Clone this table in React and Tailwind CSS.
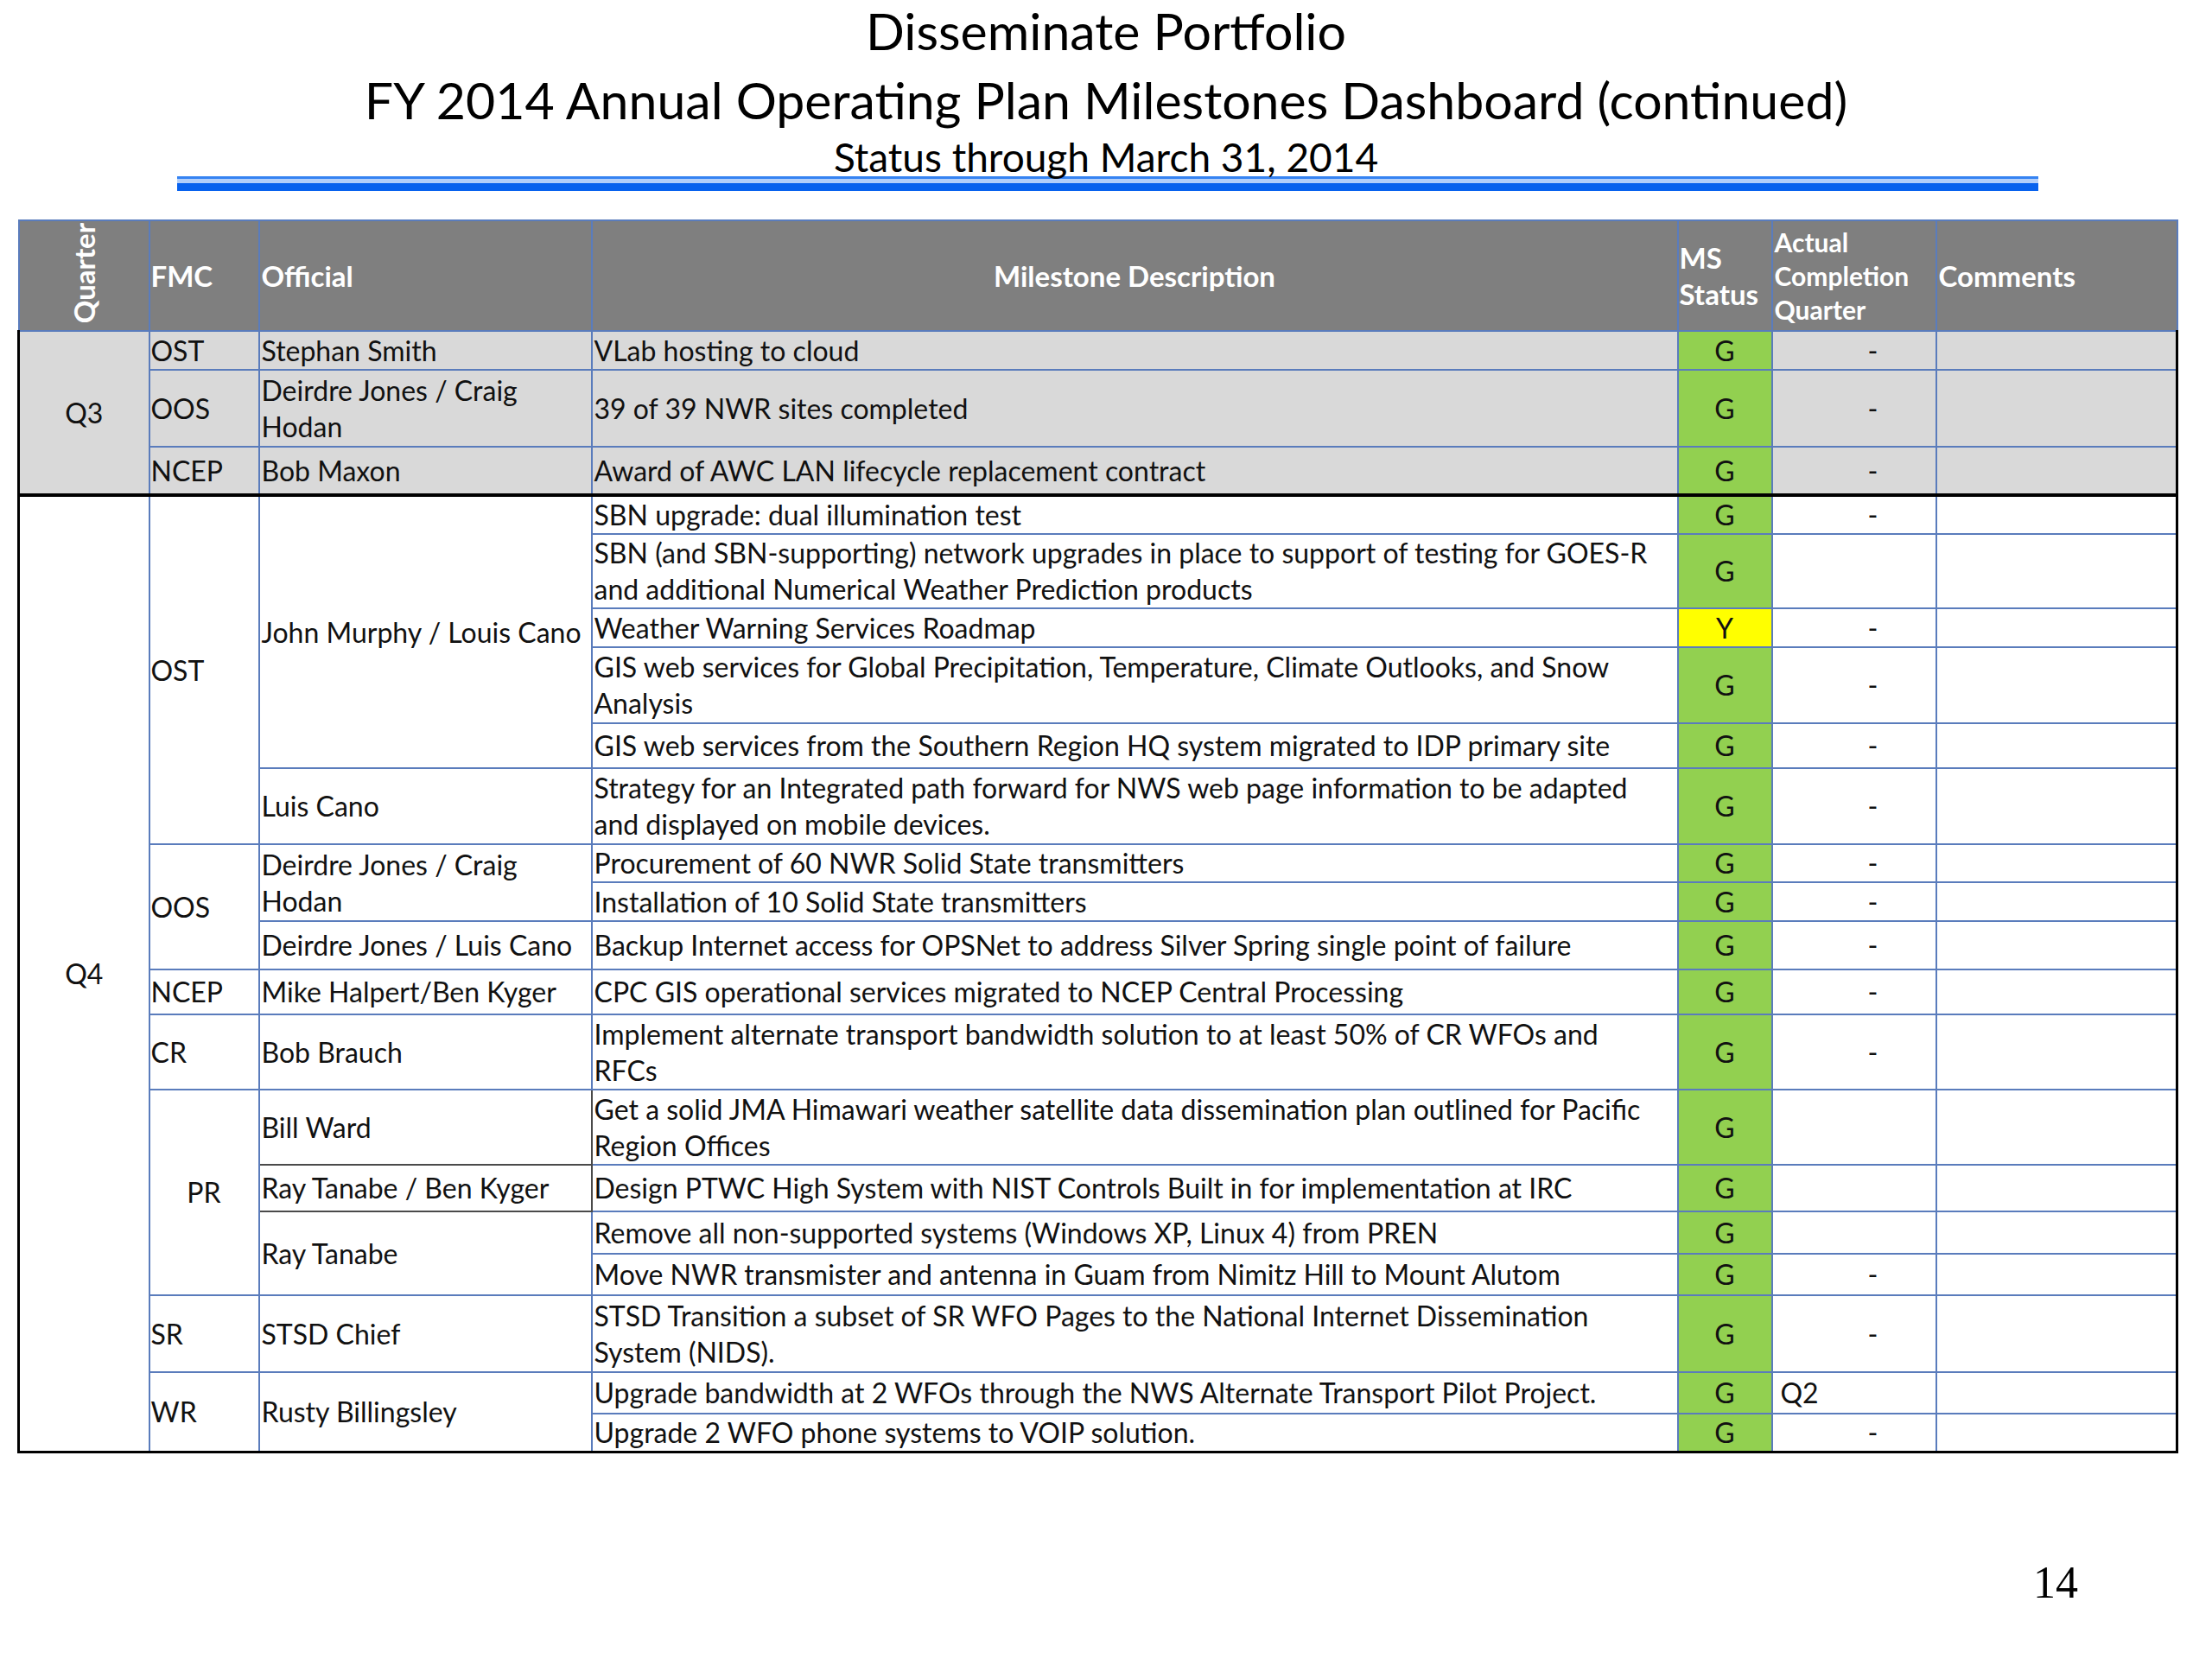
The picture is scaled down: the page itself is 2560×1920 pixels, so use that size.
import React from 'react';

const LINE = 'border-2 border-[#5a7cbc]';

const Q3_ROWS = [
  { h: 45, fmc: 'OST', official: ['Stephan Smith'], desc: ['VLab hosting to cloud'], status: 'G', actual: '-' },
  { h: 89, fmc: 'OOS', official: ['Deirdre Jones / Craig', 'Hodan'], desc: ['39 of 39 NWR sites completed'], status: 'G', actual: '-' },
  { h: 56, fmc: 'NCEP', official: ['Bob Maxon'], desc: ['Award of AWC LAN lifecycle replacement contract'], status: 'G', actual: '-' },
];

const Q4_ROWS = [
  { h: 44, fmc: { text: 'OST', span: 6 }, official: { lines: ['John Murphy / Louis Cano'], span: 5 }, desc: ['SBN upgrade: dual illumination test'], status: 'G', actual: '-' },
  { h: 86, desc: ['SBN (and SBN-supporting) network upgrades in place to support of testing for GOES-R', 'and additional Numerical Weather Prediction products'], status: 'G', actual: '' },
  { h: 45, desc: ['Weather Warning Services Roadmap'], status: 'Y', actual: '-' },
  { h: 88, desc: ['GIS web services for Global Precipitation, Temperature, Climate Outlooks, and Snow', 'Analysis'], status: 'G', actual: '-' },
  { h: 52, desc: ['GIS web services from the Southern Region HQ system migrated to IDP primary site'], status: 'G', actual: '-' },
  { h: 88, official: { lines: ['Luis Cano'], span: 1 }, desc: ['Strategy for an Integrated path forward for NWS web page information to be adapted', 'and displayed on mobile devices.'], status: 'G', actual: '-' },
  { h: 44, fmc: { text: 'OOS', span: 3 }, official: { lines: ['Deirdre Jones / Craig', 'Hodan'], span: 2 }, desc: ['Procurement of 60 NWR Solid State transmitters'], status: 'G', actual: '-' },
  { h: 45, desc: ['Installation of 10 Solid State transmitters'], status: 'G', actual: '-' },
  { h: 56, official: { lines: ['Deirdre Jones / Luis Cano'], span: 1 }, desc: ['Backup Internet access for OPSNet to address Silver Spring single point of failure'], status: 'G', actual: '-' },
  { h: 52, fmc: { text: 'NCEP', span: 1 }, official: { lines: ['Mike Halpert/Ben Kyger'], span: 1 }, desc: ['CPC GIS operational services migrated to NCEP Central Processing'], status: 'G', actual: '-' },
  { h: 87, fmc: { text: 'CR', span: 1 }, official: { lines: ['Bob Brauch'], span: 1 }, desc: ['Implement alternate transport bandwidth solution to at least 50% of CR WFOs and', 'RFCs'], status: 'G', actual: '-' },
  { h: 87, fmc: { text: 'PR', span: 4, center: true }, official: { lines: ['Bill Ward'], span: 1, dark: true }, desc: ['Get a solid JMA Himawari weather satellite data dissemination plan outlined for Pacific', 'Region Offices'], status: 'G', actual: '' },
  { h: 54, official: { lines: ['Ray Tanabe / Ben Kyger'], span: 1, dark: true }, desc: ['Design PTWC High System with NIST Controls Built in for implementation at IRC'], status: 'G', actual: '' },
  { h: 49, official: { lines: ['Ray Tanabe'], span: 2 }, desc: ['Remove all non-supported systems (Windows XP, Linux 4) from PREN'], status: 'G', actual: '' },
  { h: 48, desc: ['Move NWR transmister and antenna in Guam from Nimitz Hill to Mount Alutom'], status: 'G', actual: '-' },
  { h: 89, fmc: { text: 'SR', span: 1 }, official: { lines: ['STSD Chief'], span: 1 }, desc: ['STSD Transition a subset of SR WFO Pages to the National Internet Dissemination', 'System (NIDS).'], status: 'G', actual: '-' },
  { h: 48, fmc: { text: 'WR', span: 2 }, official: { lines: ['Rusty Billingsley'], span: 2 }, desc: ['Upgrade bandwidth at 2 WFOs through the NWS Alternate Transport Pilot Project.'], status: 'G', actual: 'Q2' },
  { h: 43, desc: ['Upgrade 2 WFO phone systems to VOIP solution.'], status: 'G', actual: '-' },
];

function Lines({ lines }) {
  return lines.map((l, i) => (
    <div key={i} className="whitespace-nowrap">{l}</div>
  ));
}

function TailCells({ row, bg, last, groupEnd }) {
  const bottom = last ? 'border-b-[3px] border-b-black' : groupEnd ? 'border-b-[4px] border-b-black' : '';
  return (
    <>
      <td className={`${LINE} ${bottom} ${bg} pl-[2px] align-middle`}>
        <Lines lines={row.desc} />
      </td>
      <td className={`${LINE} ${bottom} text-center align-middle ${row.status === 'Y' ? 'bg-[#ffff00]' : 'bg-[#92d050]'}`}>
        {row.status}
      </td>
      <td
        className={`${LINE} ${bottom} ${bg} align-middle ${
          row.actual === 'Q2' ? 'text-left pl-[9px]' : 'text-right pr-[66px]'
        }`}
      >
        {row.actual}
      </td>
      <td className={`${LINE} ${bottom} ${bg} border-r-[3px] border-r-black`} />
    </>
  );
}

export default function App() {
  return (
    <div
      className="w-[2560px] h-[1920px] bg-white text-[#111] overflow-hidden"
      style={{ fontFamily: 'Lato, "Open Sans", sans-serif' }}
    >
      {/* ── TITLE ── */}
      <div className="flex flex-col items-center text-black">
        <div className="text-[59px] leading-[72px]">Disseminate Portfolio</div>
        <div className="text-[59px] leading-[88px]">FY 2014 Annual Operating Plan Milestones Dashboard (continued)</div>
        <div className="text-[46px] leading-[44px]">Status through March 31, 2014</div>
      </div>

      {/* blue rule */}
      <div className="mx-[205px] w-[2154px]">
        <div className="h-[3px] bg-[#3583f2]" />
        <div className="h-[5px] bg-[#b3cffa]" />
        <div className="h-[9px] bg-[#0862ee]" />
      </div>

      {/* ── TABLE ── */}
      <div className="pl-[20px] mt-[33px]">
        <table className="table-fixed border-collapse w-[2498px] text-[32px] leading-[42px]">
          <colgroup>
            <col className="w-[151px]" />
            <col className="w-[127px]" />
            <col className="w-[385px]" />
            <col className="w-[1257px]" />
            <col className="w-[109px]" />
            <col className="w-[190px]" />
            <col className="w-[279px]" />
          </colgroup>
          <thead>
            <tr className="h-[128px] bg-[#7f7f7f] text-white font-bold text-[33px]">
              <th className={`${LINE} align-bottom pb-[8px]`}>
                <div className="flex justify-center">
                  <div className="[writing-mode:vertical-rl] rotate-180 text-[33px] leading-[34px]">Quarter</div>
                </div>
              </th>
              <th className={`${LINE} text-left pl-[1px]`}>FMC</th>
              <th className={`${LINE} text-left pl-[2px]`}>Official</th>
              <th className={`${LINE} text-center`}>Milestone Description</th>
              <th className={`${LINE} text-left pl-[1px] leading-[42px]`}>MS<br />Status</th>
              <th className={`${LINE} text-left pl-[2px] text-[30px] leading-[39px]`}>Actual<br />Completion<br />Quarter</th>
              <th className={`${LINE} text-left pl-[2px]`}>Comments</th>
            </tr>
          </thead>
          <tbody>
            {Q3_ROWS.map((row, i) => {
              const end = i === Q3_ROWS.length - 1 ? 'border-b-[4px] border-b-black' : '';
              return (
                <tr key={`q3-${i}`} style={{ height: row.h }}>
                  {i === 0 && (
                    <td rowSpan={3} className={`${LINE} bg-[#d9d9d9] border-l-[3px] border-l-black border-b-[4px] border-b-black text-center align-middle`}>
                      Q3
                    </td>
                  )}
                  <td className={`${LINE} ${end} bg-[#d9d9d9] pl-[1px]`}>{row.fmc}</td>
                  <td className={`${LINE} ${end} bg-[#d9d9d9] pl-[2px]`}>
                    <Lines lines={row.official} />
                  </td>
                  <TailCells row={row} bg="bg-[#d9d9d9]" groupEnd={i === Q3_ROWS.length - 1} />
                </tr>
              );
            })}
            {Q4_ROWS.map((row, i) => {
              const last = i === Q4_ROWS.length - 1;
              const endsAtBottom = (span) => i + span === Q4_ROWS.length;
              return (
                <tr key={`q4-${i}`} style={{ height: row.h }}>
                  {i === 0 && (
                    <td rowSpan={Q4_ROWS.length} className={`${LINE} border-l-[3px] border-l-black border-b-[3px] border-b-black text-center align-middle`}>
                      Q4
                    </td>
                  )}
                  {row.fmc && (
                    <td
                      rowSpan={row.fmc.span}
                      className={`${LINE} ${endsAtBottom(row.fmc.span) ? 'border-b-[3px] border-b-black' : ''} ${
                        row.fmc.center ? 'text-center' : 'pl-[1px]'
                      }`}
                    >
                      {row.fmc.text}
                    </td>
                  )}
                  {row.official && (
                    <td
                      rowSpan={row.official.span}
                      className={`${row.official.dark ? 'border-2 border-[#4a4a4a] border-l-[#5a7cbc]' : LINE} ${
                        endsAtBottom(row.official.span) ? 'border-b-[3px] border-b-black' : ''
                      } pl-[2px]`}
                    >
                      <Lines lines={row.official.lines} />
                    </td>
                  )}
                  <TailCells row={row} bg="bg-white" last={last} />
                </tr>
              );
            })}
          </tbody>
        </table>
      </div>

      {/* page number */}
      <div
        className="flex justify-end pr-[155px] mt-[120px] text-[52px] leading-[60px] text-black"
        style={{ fontFamily: '"Liberation Serif", serif' }}
      >
        14
      </div>
    </div>
  );
}
